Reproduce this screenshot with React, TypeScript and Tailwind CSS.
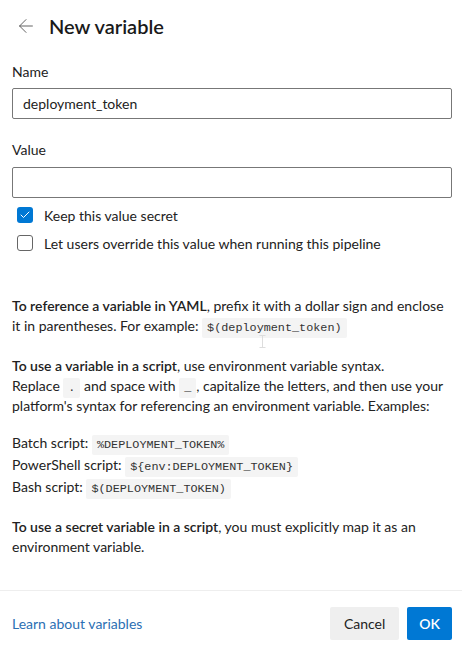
import { ArrowLeft, Check } from 'lucide-react'

const code = 'rounded-[2px] bg-[#f4f4f4] px-[5px] py-[3px] font-["Liberation_Mono",monospace] text-[11.8px] leading-none text-[#333]'

function Checkbox({ checked, label }: { checked: boolean; label: string }) {
  return (
    <label className="flex h-[28px] items-center gap-[11px] pl-[5px]">
      {checked ? (
        <span className="flex h-[16px] w-[16px] items-center justify-center rounded-[3px] bg-[#0078d4]">
          <Check className="h-[12px] w-[12px] text-white" strokeWidth={2} />
        </span>
      ) : (
        <span className="h-[16px] w-[16px] rounded-[3px] border border-[#666]" />
      )}
      <span>{label}</span>
    </label>
  )
}

export default function App() {
  return (
    <div className='relative flex h-[648px] w-[462px] flex-col bg-white font-["Lato",sans-serif] text-[14px] text-[#222]'>
      <div className="flex h-[52px] items-center gap-[12px] pl-[15px]">
        <ArrowLeft className="h-[22px] w-[22px] text-[#555]" strokeWidth={1} />
        <h1 className="text-[20px] font-semibold text-[#1a1a1a]">New variable</h1>
      </div>

      <div className="flex-1 pl-[12px] pr-[10px]">
        <label className="mt-[10px] block leading-[20px]">Name</label>
        <input
          defaultValue="deployment_token"
          className="mt-[6px] block h-[31px] w-full rounded-[2px] border border-[#777] px-[10px] outline-none"
        />

        <label className="mt-[21px] block leading-[20px]">Value</label>
        <input className="mt-[7px] block h-[31px] w-full rounded-[2px] border border-[#777] px-[10px] outline-none" />

        <div className="mt-[3px]">
          <Checkbox checked label="Keep this value secret" />
          <Checkbox checked={false} label="Let users override this value when running this pipeline" />
        </div>

        <div className="mt-[39px] leading-[20px]">
          <p>
            <b className="font-semibold">To reference a variable in YAML</b>, prefix it with a dollar sign and enclose
            it in parentheses. For example: <code className={code}>$(deployment_token)</code>
          </p>
          <p className="mt-[20px]">
            <b className="font-semibold">To use a variable in a script</b>, use environment variable syntax.
            <br />
            Replace <code className={code}>.</code> and space with <code className={code}>_</code>, capitalize the
            letters, and then use your
            <br />
            platform's syntax for referencing an environment variable. Examples:
          </p>
          <div className="mt-[16px] leading-[22px]">
            <p>
              Batch script: <code className={code}>%DEPLOYMENT_TOKEN%</code>
            </p>
            <p>
              PowerShell script: <code className={code}>{'${env:DEPLOYMENT_TOKEN}'}</code>
            </p>
            <p>
              Bash script: <code className={code}>$(DEPLOYMENT_TOKEN)</code>
            </p>
          </div>
          <p className="mt-[19px]">
            <b className="font-semibold">To use a secret variable in a script</b>, you must explicitly map it as an
            environment variable.
          </p>
        </div>
      </div>

      {/* mouse pointer (I-beam) resting over the help text */}
      <svg className="pointer-events-none absolute left-[259px] top-[335px]" width="7" height="13" viewBox="0 0 7 13">
        <path d="M0.5 0.5h6M3.5 0.5v12M0.5 12.5h6" stroke="#ddd" strokeWidth="1" fill="none" />
      </svg>

      <div className="flex items-center justify-between border-t border-[#eee] pb-[8px] pl-[12px] pr-[10px] pt-[16px]">
        <a href="#" className="text-[#2b6fb3]">
          Learn about variables
        </a>
        <div className="flex gap-[8px]">
          <button className="h-[33px] rounded-[2px] bg-[#efefef] px-[14px] text-[#222]">Cancel</button>
          <button className="h-[33px] rounded-[2px] bg-[#0078d4] px-[12px] font-semibold text-white">OK</button>
        </div>
      </div>
    </div>
  )
}
